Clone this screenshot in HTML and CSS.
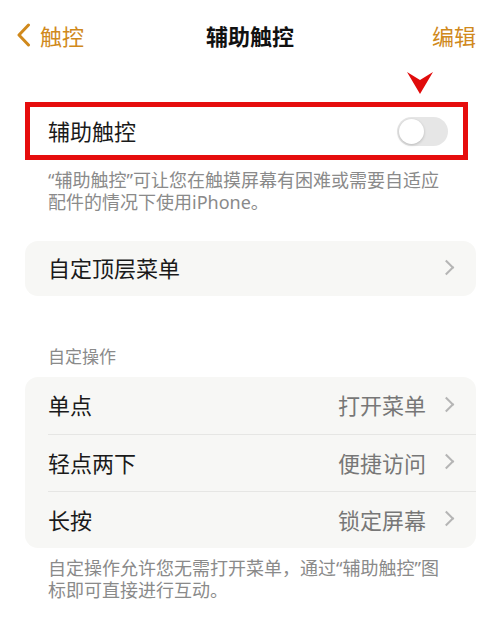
FILE: index.html
```html
<!DOCTYPE html>
<html lang="zh-CN">
<head>
  <meta charset="UTF-8" />
  <meta name="viewport" content="width=device-width, initial-scale=1.0"/>
  <title>辅助触控</title>
  <link rel="stylesheet" href="styles.css">
</head>
<body>
  <div class="nav">
    <div class="nav-back">
      <svg class="back-icon" width="15" height="24" viewBox="0 0 15 24"><path d="M12.5 2 L3 12 L12.5 22" fill="none" stroke="#d0891c" stroke-width="3" stroke-linecap="round" stroke-linejoin="round"/></svg>
      <span>触控</span>
    </div>
    <div class="nav-title">辅助触控</div>
    <div class="nav-edit">编辑</div>
  </div>

  <div class="main">
    <div class="highlight">
      <svg class="marker" width="26" height="22" viewBox="0 0 26 22"><path d="M0 0 L13 8 L26 0 L13 22 Z" fill="#e00b0b"/></svg>
      <div class="toggle-row">
        <span class="toggle-label">辅助触控</span>
        <span class="switch"><span class="knob"></span></span>
      </div>
    </div>
    <p class="note">“辅助触控”可让您在触摸屏幕有困难或需要自适应<br>配件的情况下使用iPhone。</p>

    <div class="card single">
      <div class="row">
        <span class="label">自定顶层菜单</span>
        <span class="chev"></span>
      </div>
    </div>

    <div class="section-title">自定操作</div>
    <div class="card">
      <div class="row">
        <span class="label">单点</span>
        <span class="value">打开菜单</span>
        <span class="chev"></span>
      </div>
      <div class="row">
        <span class="label">轻点两下</span>
        <span class="value">便捷访问</span>
        <span class="chev"></span>
      </div>
      <div class="row">
        <span class="label">长按</span>
        <span class="value">锁定屏幕</span>
        <span class="chev"></span>
      </div>
    </div>
    <p class="note">自定操作允许您无需打开菜单，通过“辅助触控”图<br>标即可直接进行互动。</p>
  </div>
</body>
</html>
```

FILE: styles.css
```css
body {
  margin: 0;
  background: #fff;
  font-family: "Noto Sans", "Noto Sans CJK SC", sans-serif;
  color: #1a1a1a;
}
.nav {
  height: 70px;
  display: flex;
  align-items: center;
  justify-content: space-between;
  padding: 0 24px 0 16px;
  position: relative;
  font-size: 22px;
}
.nav-back {
  display: flex;
  align-items: center;
  gap: 9px;
  color: #d0891c;
}
.nav-title {
  position: absolute;
  left: 0;
  right: 0;
  text-align: center;
  font-weight: 700;
  color: #111;
  pointer-events: none;
}
.nav-edit {
  color: #d0891c;
}
.main {
  padding: 32px 24px 0 25px;
}
.highlight {
  position: relative;
  width: 443px;
  box-sizing: border-box;
  border: 5px solid #e60d0d;
  background: #fff;
}
.marker {
  position: absolute;
  right: 30px;
  top: -35px;
}
.toggle-row {
  height: 48px;
  display: flex;
  align-items: center;
  justify-content: space-between;
  padding: 0 15px 2px 18px;
  box-sizing: border-box;
  font-size: 22px;
}
.switch {
  width: 51px;
  height: 29px;
  border-radius: 15px;
  background: #e6e6e6;
  position: relative;
  margin-top: 2px;
}
.knob {
  position: absolute;
  left: 2px;
  top: 2px;
  width: 25px;
  height: 25px;
  border-radius: 50%;
  background: #fff;
  box-shadow: 0 1px 3px rgba(0, 0, 0, 0.2);
}
.note {
  margin: 9px 0 0 23px;
  font-size: 18px;
  line-height: 22px;
  color: #8a8a8a;
}
.card {
  margin-top: 28px;
  background: #f7f7f5;
  border-radius: 13px;
  padding-left: 23px;
}
.row {
  height: 57px;
  box-sizing: border-box;
  display: flex;
  align-items: center;
  padding: 0 20px 3px 0;
  font-size: 22px;
  border-top: 1px solid #e6e6e4;
}
.row:first-child {
  border-top: none;
}
.single .row {
  height: 55px;
}
.label {
  flex: 1;
}
.value {
  color: #777;
  margin-right: 15px;
}
.chev {
  width: 9px;
  height: 9px;
  border-top: 2px solid #b5b5b5;
  border-right: 2px solid #b5b5b5;
  transform: rotate(45deg);
  margin-right: 4px;
}
.section-title {
  margin: 50px 0 9px 23px;
  font-size: 17px;
  line-height: 22px;
  color: #8a8a8a;
}
.section-title + .card {
  margin-top: 0;
}
```
